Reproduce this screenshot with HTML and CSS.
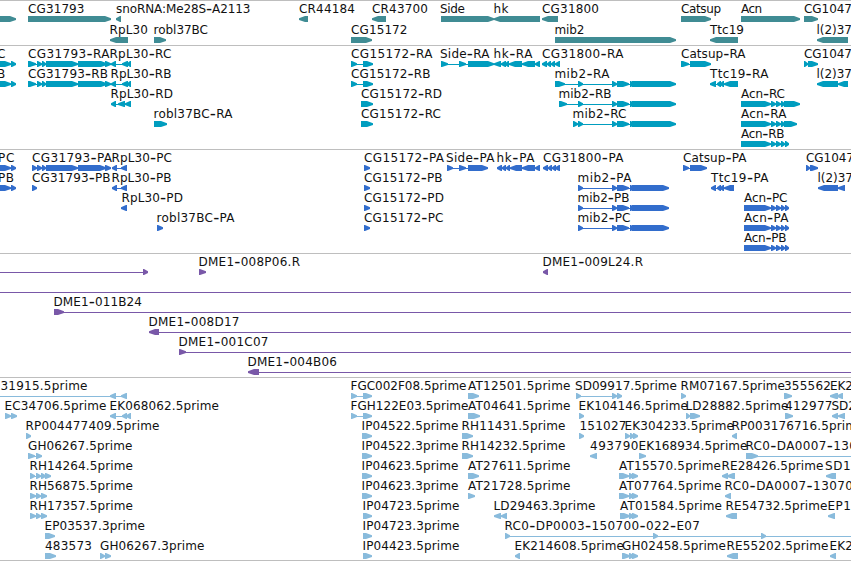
FILE: index.html
```html
<!DOCTYPE html>
<html lang="en">
<head>
  <meta charset="UTF-8" />
  <title>Genome tracks</title>
  <link rel="stylesheet" href="styles.css">
</head>
<body>
  <div class="browser">
    <div class="track genes" id="genes"></div>
    <div class="track transcripts" id="transcripts"></div>
    <div class="track proteins" id="proteins"></div>
    <div class="track clones" id="clones"></div>
    <div class="track ests" id="ests"></div>
  </div>
  <script src="tracks.js"></script>
</body>
</html>
```

FILE: styles.css
```css
body {
  margin: 0;
  background: white;
  overflow: hidden;
}
.browser {
  width: 851px;
  height: 561px;
  overflow: hidden;
  border-bottom: 1px solid #bebebe;
  box-sizing: border-box;
}
.track {
  border-top: 1px solid #bebebe;
  padding-bottom: 3px;
}
.row {
  display: block;
  width: 851px;
  height: 20px;
  overflow: visible;
}
.row text {
  font-family: "DejaVu Sans", sans-serif;
  font-size: 12px;
  fill: #111;
}
.row .dash {
  font-size: 17px;
}
.genes {
  color: #408c94;
  padding-bottom: 2px;
}
.genes .row {
  height: 21px;
}
.transcripts {
  color: #009dbf;
}
.proteins {
  color: #326dcc;
}
.clones {
  color: #7958a8;
}
.ests {
  color: #89bbdc;
  padding-bottom: 2px;
}
.exon, .intron {
  fill: currentColor;
}
.intron {
  shape-rendering: crispEdges;
}
```

FILE: tracks.js
```js
// feature: [label, label start, label end, strand, [exon start, end, start, end, ...]]
const mib2 = [612,617, 617,629, 630,634, 632];
const acn = [771,776, 776,781, 781,785];
const cgR = [28,36, 37,42, 42,46, 46,78, 78,107, 105,111];

const tracks = {
  genes: [
    [
      ["", 0, 0, ">", [-20,16]],
      ["CG31793", 28, 84.5, ">", [28,111]],
      ["snoRNA:Me28S-A2113", 116, 250.5, "<", [116,121]],
      ["CR44184", 299, 355, "<", [299,308]],
      ["CR43700", 372, 428, "<", [372,386]],
      ["Side", 440, 465, ">", [441,494]],
      ["hk", 493.5, 508.5, "<", [494,540]],
      ["CG31800", 542, 599, "<", [542,558]],
      ["Catsup", 681, 721, ">", [681,711]],
      ["Acn", 741, 762, ">", [741,800]],
      ["CG1047", 804, 852, ">", [804,818]]
    ],
    [
      ["RpL30", 109.5, 148, "<", [110,128]],
      ["robl37BC", 153.5, 208, ">", [154,166]],
      ["CG15172", 351, 407.5, ">", [351,372]],
      ["mib2", 554.5, 584.5, ">", [555,676]],
      ["Ttc19", 710, 744, "<", [710,738]],
      ["l(2)37", 816.5, 852, "<", [817,848]]
    ]
  ],
  transcripts: [
    [
      ["C", -3, 6, ">", [-20,11, 11,16]],
      ["CG31793-RA", 28, 109.5, ">", cgR],
      ["RpL30-RC", 109.5, 171.5, "<", [111,116, 122,128, 127,131]],
      ["CG15172-RA", 351, 432.5, ">", [351,357, 363,373]],
      ["Side-RA", 440, 489.5, ">", [441,448, 459,466, 468,494]],
      ["hk-RA", 493.5, 532.5, "<", [494,501, 501,506, 505,509, 509,522, 522,535, 535,540]],
      ["CG31800-RA", 542, 623.5, "<", [542,547, 547,551, 551,555, 555,560]],
      ["Catsup-RA", 681, 745.5, ">", [681,689, 690,711]],
      ["CG1047", 804, 852, ">", [804,808, 808,818]]
    ],
    [
      ["B", -3, 5.5, ">", [-20,11, 11,16]],
      ["CG31793-RB", 28, 108, ">", cgR],
      ["RpL30-RB", 110.5, 171.5, "<", [111,116, 122,128, 127,131]],
      ["CG15172-RB", 351, 430.5, ">", [351,357, 363,373]],
      ["mib2-RA", 554.5, 609.5, ">", [555,565, 578,583, ...mib2,676]],
      ["Ttc19-RA", 710, 768.5, "<", [710,716, 717,721, 720,724, 724,738]],
      ["l(2)37", 816.5, 852, "<", [817,838, 838,848]]
    ],
    [
      ["RpL30-RD", 110.5, 173, "<", [111,116, 118,125, 125,131]],
      ["CG15172-RD", 361, 442, ">", [361,373]],
      ["mib2-RB", 558.5, 611.5, ">", [559,567, 578,583, ...mib2,676]],
      ["Acn-RC", 741, 785, ">", [741,771, ...acn, 784,800]]
    ],
    [
      ["robl37BC-RA", 153.5, 232.5, ">", [154,167]],
      ["CG15172-RC", 361, 441, ">", [361,373]],
      ["mib2-RC", 572.5, 626.5, ">", [573,578, 578,583, ...mib2,676]],
      ["Acn-RA", 741, 786.5, ">", [741,771, ...acn, 784,797]]
    ],
    [
      ["Acn-RB", 741, 784.5, ">", [741,771, ...acn, 785,789]]
    ]
  ],
  proteins: [
    [
      ["PC", -2, 14.5, ">", [-20,11, 11,16]],
      ["CG31793-PA", 32, 112, ">", [32,37, 37,42, 42,46, 46,78, 78,106, 105,111]],
      ["RpL30-PC", 111.5, 172, "<", [112,117, 121,127]],
      ["CG15172-PA", 364, 444, ">", [364,370]],
      ["Side-PA", 446, 494.5, ">", [447,453, 459,466, 468,488]],
      ["hk-PA", 496.5, 534.5, "<", [497,502, 502,506, 506,510, 510,522, 522,535, 535,540]],
      ["CG31800-PA", 543, 623.5, "<", [543,548, 548,552, 552,556, 555,560]],
      ["Catsup-PA", 683, 746.5, ">", [683,689, 690,707]],
      ["CG1047", 806, 854, ">", [806,810, 810,818]]
    ],
    [
      ["PB", -2, 14, ">", [-20,11, 11,16]],
      ["CG31793-PB", 32, 110.5, ">", [32,37]],
      ["RpL30-PB", 111.5, 171.5, "<", [112,117, 121,127]],
      ["CG15172-PB", 364, 442.5, ">", [364,370]],
      ["mib2-PA", 577.5, 631.5, ">", [578,583, ...mib2,669]],
      ["Ttc19-PA", 711, 768.5, "<", [711,716, 717,721, 720,724, 724,734]],
      ["l(2)37", 817.5, 853, "<", [818,838, 838,845]]
    ],
    [
      ["RpL30-PD", 121.5, 183, "<", [121,127]],
      ["CG15172-PD", 364, 444, ">", [364,370]],
      ["mib2-PB", 577.5, 629.5, ">", [578,583, ...mib2,669]],
      ["Acn-PC", 744, 787.5, ">", [744,771, ...acn, 785,789]]
    ],
    [
      ["robl37BC-PA", 156.5, 234.5, ">", [157,163]],
      ["CG15172-PC", 364, 443.5, ">", [364,370]],
      ["mib2-PC", 577.5, 630.5, ">", [578,583, ...mib2,669]],
      ["Acn-PA", 744, 788.5, ">", [744,771, ...acn, 785,789]]
    ],
    [
      ["Acn-PB", 744, 786.5, ">", [744,771, ...acn, 785,789]]
    ]
  ],
  clones: [
    [
      ["", 0, 0, ">", [-20,-10, 143,148]],
      ["DME1-008P06.R", 198.5, 300, ">", [199,206]],
      ["DME1-009L24.R", 542.5, 643, "<", [543,548]]
    ],
    [
      ["", 0, 0, ">", [-20,-10, 870,880]]
    ],
    [
      ["DME1-011B24", 53.5, 142, ">", [54,64, 870,880]]
    ],
    [
      ["DME1-008D17", 148.5, 239.5, "<", [149,159, 870,880]]
    ],
    [
      ["DME1-001C07", 178.5, 268.5, ">", [179,186, 870,880]]
    ],
    [
      ["DME1-004B06", 247.5, 337, "<", [248,259, 870,880]]
    ]
  ],
  ests: [
    [
      ["31915.5prime", 0.5, 87.5, "<", [-20,-10, 110,116, 121,127]],
      ["FGC002F08.5prime", 350.5, 466.5, ">", [351,357, 363,372]],
      ["AT12501.5prime", 468, 570.5, ">", [468,479]],
      ["SD09917.5prime", 575, 677, ">", [576,581, 612,617, 617,622]],
      ["RM07167.5prime", 680.5, 785, ">", [681,686]],
      ["355562", 784, 831, ">", [784,792]],
      ["EK2", 830, 853, "<", [830,838, 837,843]]
    ],
    [
      ["EC34706.5prime", 4.5, 106.5, ">", [5,11, 11,17]],
      ["EK068062.5prime", 109.5, 219, "<", [110,116, 122,127, 126,131]],
      ["FGH122E03.5prime", 350.5, 468.5, ">", [351,357, 363,372]],
      ["AT04641.5prime", 468, 570.5, ">", [468,480]],
      ["EK104146.5prime", 578.5, 688, ">", [579,584]],
      ["LD28882.5prime", 685.5, 788.5, ">", [686,690, 690,700]],
      ["412977", 785, 832.5, ">", [785,793]],
      ["SD2", 831.5, 856, "<", [832,838, 838,845]]
    ],
    [
      ["RP004477409.5prime", 25.5, 159.5, ">", [26,31]],
      ["IP04522.5prime", 361.5, 458.5, ">", [362,372]],
      ["RH11431.5prime", 461.5, 565.5, ">", [462,473]],
      ["151027", 579.5, 626.5, ">", [579,584]],
      ["EK304233.5prime", 624.5, 734, ">", [625,630, 630,634, 633,638]],
      ["RP003176716.5prime", 731.5, 864.5, "<", [732,737]]
    ],
    [
      ["GH06267.5prime", 28, 132.5, ">", [28,35, 36,42]],
      ["IP04522.3prime", 361.5, 458.5, ">", [362,372]],
      ["RH14232.5prime", 461.5, 565.5, ">", [462,473]],
      ["493790", 590, 638.5, "<", [590,597]],
      ["EK168934.5prime", 638.5, 747.5, ">", [639,646]],
      ["RC0-DA0007-130", 745.5, 857, ">", [746,758, 870,880]]
    ],
    [
      ["RH14264.5prime", 29.5, 133, ">", [30,35, 36,41, 41,46, 45,51]],
      ["IP04623.5prime", 361.5, 458.5, ">", [362,372]],
      ["AT27611.5prime", 468, 570.5, ">", [468,479]],
      ["AT15570.5prime", 619, 721, ">", [619,629, 629,634, 632,638]],
      ["RE28426.5prime", 721.5, 823.5, "<", [722,728, 727,735]],
      ["SD14", 825, 859, "<", [826,836]]
    ],
    [
      ["RH56875.5prime", 29.5, 133, ">", [30,36, 36,41, 41,47]],
      ["IP04623.3prime", 361.5, 458.5, ">", [362,372]],
      ["AT21728.5prime", 468, 570.5, ">", [468,475]],
      ["AT07764.5prime", 619, 721.5, ">", [619,629, 629,634, 632,638]],
      ["RC0-DA0007-13070", 724.5, 853, "<", [725,731]]
    ],
    [
      ["RH17357.5prime", 29.5, 133, ">", [30,36, 36,41, 41,47]],
      ["IP04723.5prime", 362.5, 459.5, ">", [363,372]],
      ["LD29463.3prime", 493.5, 595.5, "<", [494,501, 501,507]],
      ["AT01584.5prime", 620, 722, ">", [620,630, 629,634, 632,638]],
      ["RE54732.5prime", 725.5, 827.5, "<", [726,737]],
      ["EP1", 827.5, 851, "<", [828,835]]
    ],
    [
      ["EP03537.3prime", 44.5, 145, ">", [45,55]],
      ["IP04723.3prime", 362.5, 459.5, ">", [363,372]],
      ["RC0-DP0003-150700-022-E07", 504.5, 700, ">", [505,510, 653,658, 761,766, 870,880]]
    ],
    [
      ["483573", 45, 92, ">", [45,56]],
      ["GH06267.3prime", 100, 204.5, ">", [100,105, 105,111]],
      ["IP04423.5prime", 362.5, 459.5, ">", [363,372]],
      ["EK214608.5prime", 514.5, 624, "<", [515,520]],
      ["GH02458.5prime", 622, 726, ">", [622,630, 629,634, 632,638]],
      ["RE55202.5prime", 726.5, 828.5, "<", [727,738]],
      ["EK2", 829.5, 853, "<", [830,836]]
    ]
  ]
};

function add(parent, name, attrs) {
  const el = document.createElementNS("http://www.w3.org/2000/svg", name);
  for (const key in attrs) el.setAttribute(key, attrs[key]);
  parent.appendChild(el);
  return el;
}

function drawExon(svg, a, b, strand) {
  const head = Math.min(6, b - a - 1);
  const points = strand === ">"
    ? `${a},15 ${b - head},15 ${b},17.2 ${b},19 ${b - head},21 ${a},21`
    : `${b},15 ${a + head},15 ${a},17.2 ${a},19 ${a + head},21 ${b},21`;
  add(svg, "polygon", { class: "exon", points });
}

// a plain hyphen is too short at this size, so dashes get their own span
function drawLabel(svg, label, start, end) {
  const text = add(svg, "text", { x: start, y: 12, textLength: end - start });
  label.split("-").forEach((part, i) => {
    if (i > 0) {
      add(text, "tspan", { class: "dash", dy: 1.3 }).textContent = "-";
      add(text, "tspan", { dy: -1.3 }).textContent = part;
    } else {
      add(text, "tspan", {}).textContent = part;
    }
  });
}

function drawFeature(svg, [label, start, end, strand, exons]) {
  const first = exons[0];
  const last = exons[exons.length - 1];
  if (exons.length > 2) {
    add(svg, "rect", { class: "intron", x: first, y: 18, width: last - first, height: 1 });
  }
  for (let i = 0; i < exons.length; i += 2) {
    drawExon(svg, exons[i], exons[i + 1], strand);
  }
  if (label) drawLabel(svg, label, start, end);
}

for (const id in tracks) {
  const track = document.getElementById(id);
  tracks[id].forEach(row => {
    const svg = add(track, "svg", { class: "row" });
    row.forEach(feature => drawFeature(svg, feature));
  });
}
```
